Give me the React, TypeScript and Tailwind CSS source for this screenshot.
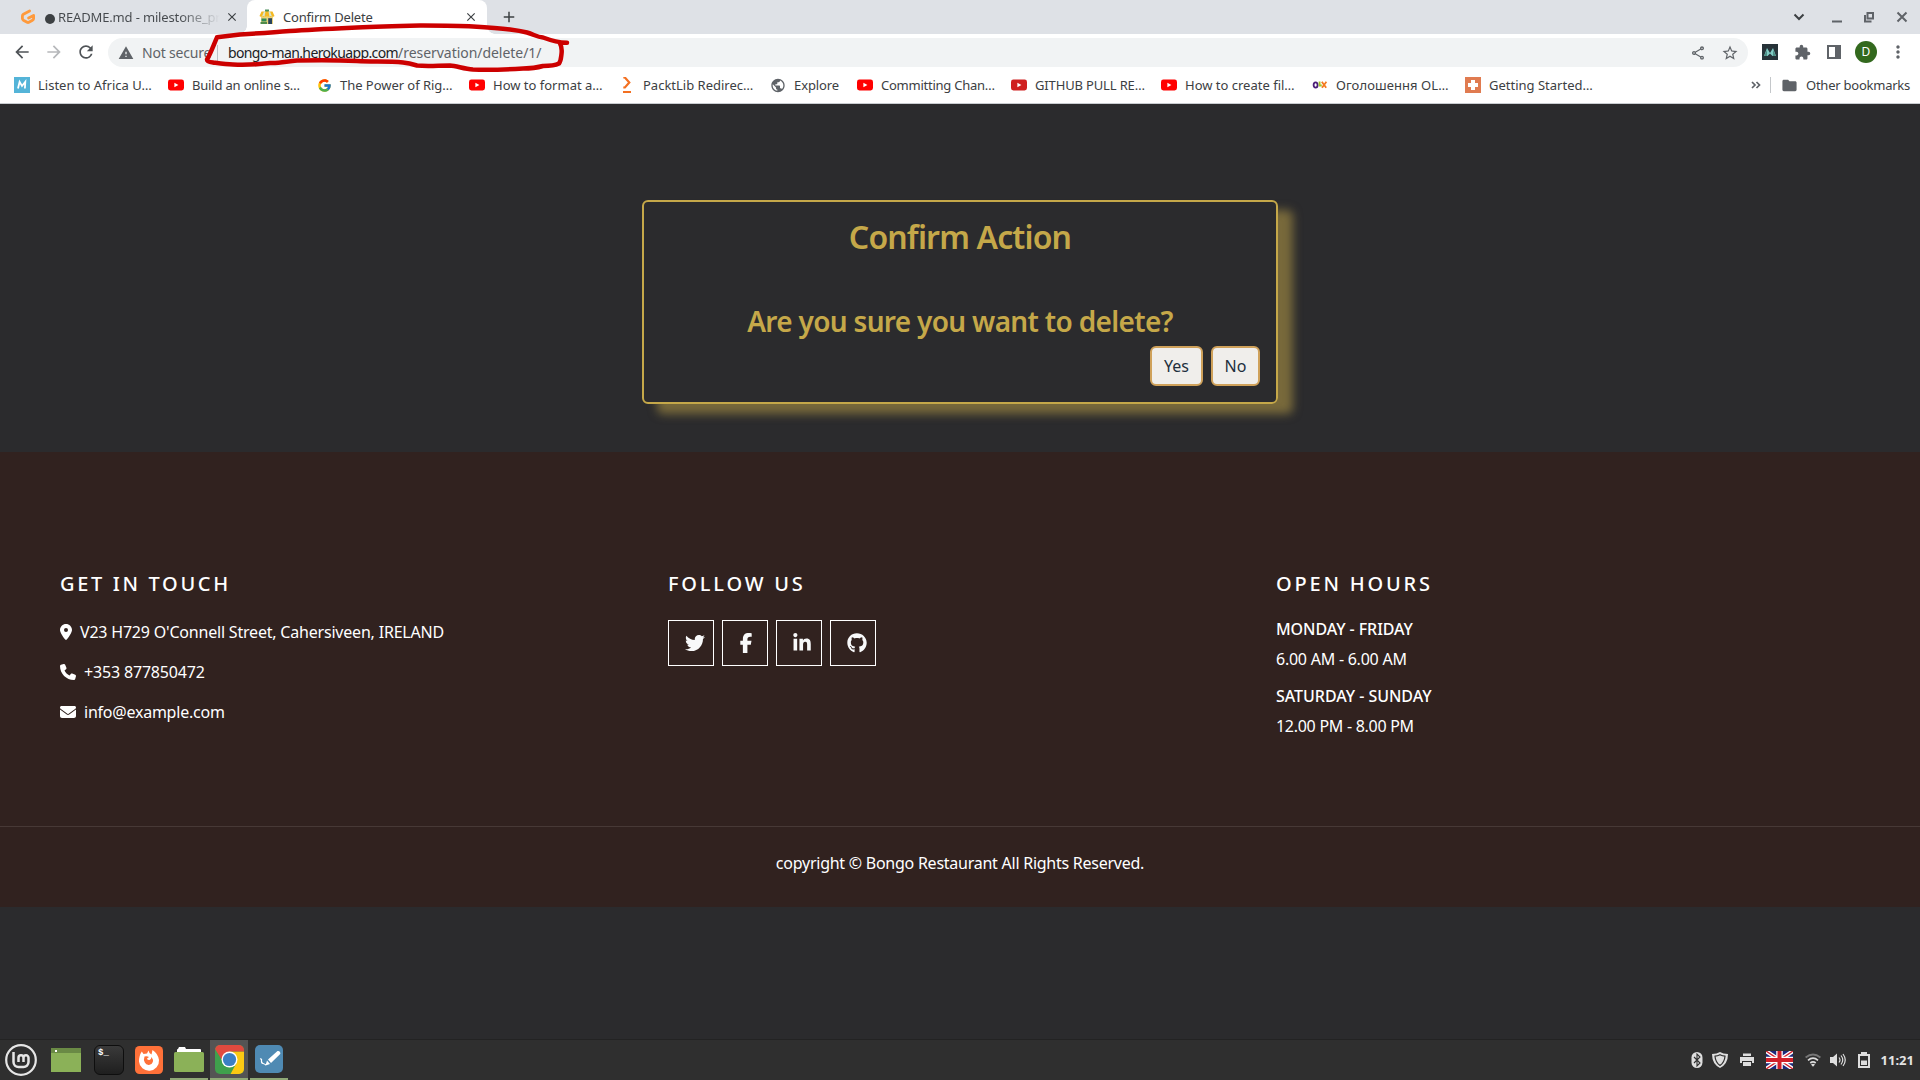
import React from "react";
import {
  MdArrowBack,
  MdArrowForward,
  MdRefresh,
  MdWarning,
  MdExtension,
  MdStarBorder,
  MdMoreVert,
  MdClose,
  MdPublic,
  MdOutlineShare,
  MdFolder,
  MdAdd,
} from "react-icons/md";
import { FaTwitter, FaFacebookF, FaLinkedinIn, FaGithub, FaPhone, FaEnvelope, FaLocationDot } from "react-icons/fa6";
import { FcGoogle } from "react-icons/fc";

const YouTube = ({ dark = false }: { dark?: boolean }) => (
  <svg viewBox="0 0 16 16" className="size-4">
    <rect x="0" y="2.5" width="16" height="11" rx="2.4" fill={dark ? "#cf2020" : "#ff0000"} />
    <path d="M6.4 5.7v4.6L10.4 8z" fill="#fff" />
  </svg>
);

const Packt = () => (
  <svg viewBox="0 0 16 16" className="size-4" fill="none" stroke="#f37021" strokeWidth="2">
    <path d="M4.3 0.5h1.6l4.4 5-4.4 5H4.3" strokeWidth="2.2" />
    <path d="M4 15h8" />
  </svg>
);

const Gitpod = () => (
  <svg viewBox="0 0 16 16" className="size-4" fill="none" stroke="#ff9a3c" strokeWidth="2.8" strokeLinecap="round" strokeLinejoin="round">
    <path d="M9.6 2 3.4 5.3Q2.4 5.9 2.4 7v2.6q0 1 1 1.6l3.7 2.1q.9.5 1.8 0l3.6-2.1q1.1-.6 1.1-1.7V6.4L8.6 9" />
  </svg>
);

const Store = () => (
  <svg viewBox="0 0 16 16" className="size-4">
    <path d="M2 7h12v8H2z" fill="#e9d27c" />
    <path d="M6 .5h4v3H6z" fill="#4a8f5a" />
    <path d="M2.500 2.500h11l2 4.500q-1.200 1.600-2.600 0-1.300 1.600-2.500 0-1.200 1.600-2.400 0-1.200 1.600-2.400 0-1.200 1.600-2.500 0Q1.700 8.600.5 7z" fill="#f5b921" />
    <path d="M5 2.500h1.500L5.600 7H3.200zM9.500 2.500H11L12.800 7h-2.400z" fill="#d8e6d0" />
    <path d="M2.500 9.500h5v3h-5z" fill="#2e8b57" />
    <path d="M9.200 9.200h3.800V15H9.200z" fill="#28435b" />
    <path d="M1.500 13h6.500v2H1.500z" fill="#4f8b4a" />
  </svg>
);

type Bookmark = { label: string; icon: React.ReactNode; cls: string; text: string };

const bookmarks: Bookmark[] = [
  {
    label: "Listen to Africa U…",
    cls: "w-[154px]",
    text: "tracking-normal",
    icon: (
      <svg viewBox="0 0 16 16" className="size-4">
        <rect width="16" height="16" fill="#54b4d8" />
        <path d="M4 11.5 5.6 4.8 8 9l3.3-4.2-.4 6.7" fill="none" stroke="#fff" strokeWidth="1.8" />
      </svg>
    ),
  },
  { label: "Build an online s…", cls: "w-[148px]", text: "tracking-[-0.18px]", icon: <YouTube /> },
  { label: "The Power of Rig…", cls: "w-[153px]", text: "tracking-[-0.04px]", icon: <FcGoogle className="size-[15px]" /> },
  { label: "How to format a…", cls: "w-[150px]", text: "tracking-[0px]", icon: <YouTube /> },
  { label: "PacktLib Redirec…", cls: "w-[151px]", text: "tracking-[0px]", icon: <Packt /> },
  { label: "Explore", cls: "w-[87px]", text: "tracking-[-0.1px]", icon: <MdPublic className="size-[17px] text-[#5f6368]" /> },
  { label: "Committing Chan…", cls: "w-[154px]", text: "tracking-[-0.24px]", icon: <YouTube /> },
  { label: "GITHUB PULL RE…", cls: "w-[150px]", text: "tracking-[-0.15px]", icon: <YouTube dark /> },
  { label: "How to create fil…", cls: "w-[151px]", text: "tracking-[0px]", icon: <YouTube /> },
  {
    label: "Оголошення OL…",
    cls: "w-[153px]",
    text: "tracking-[0.08px]",
    icon: (
      <svg viewBox="0 0 16 16" className="size-4" fill="none" strokeWidth="1.8">
        <ellipse cx="3.6" cy="8" rx="2" ry="2.7" stroke="#4b1e78" />
        <path d="M7.6 4.5v4h2.2" stroke="#a3c52c" />
        <path d="m9.8 4.8 4.4 6M14.4 4.8l-4.4 6" stroke="#f47b20" />
      </svg>
    ),
  },
  {
    label: "Getting Started…",
    cls: "w-[140px]",
    text: "tracking-[0px]",
    icon: (
      <svg viewBox="0 0 16 16" className="size-4">
        <rect width="16" height="16" fill="#e07b50" />
        <path d="M6 3h4v3h3v4h-3v3H6v-3H3V6h3z" fill="#fff" />
      </svg>
    ),
  },
];

function TabStrip() {
  return (
    <div className="flex h-[34px] items-stretch bg-[#dee1e6] text-[13px] text-[#3c4043]">
      <div className="flex w-[247px] items-center pl-5">
        <Gitpod />
        <span className="mt-[3px] ml-[9px] size-[10px] rounded-full bg-[#3c4043]" />
        <span className="mt-[2px] ml-[3px] w-[162px] overflow-hidden bg-gradient-to-r from-[#45494d] from-75% to-[#dee1e6] bg-clip-text whitespace-nowrap tracking-[-0.15px] text-transparent">
          README.md - milestone_pr
        </span>
        <MdClose className="ml-[5px] size-[14px]" />
      </div>
      <div className="relative flex w-[240px] items-center rounded-t-lg bg-white pl-3">
        <span className="absolute bottom-0 -left-2 size-2 bg-[radial-gradient(circle_at_0_0,transparent_7.5px,white_8px)]" />
        <span className="absolute -right-2 bottom-0 size-2 bg-[radial-gradient(circle_at_100%_0,transparent_7.5px,white_8px)]" />
        <Store />
        <span className="mt-[2px] ml-2 w-[181px] tracking-[-0.2px]">Confirm Delete</span>
        <MdClose className="size-[14px]" />
      </div>
      <div className="flex w-[1300px] items-center pl-[13px]">
        <MdAdd className="size-[18px]" />
      </div>
      <div className="flex items-center pl-[4px] text-[#5f6368]">
        <svg viewBox="0 0 16 16" className="size-4" fill="none" stroke="#3c4043" strokeWidth="2">
          <path d="m3.5 5.5 4.5 4.5 4.5-4.5" />
        </svg>
        <svg viewBox="0 0 16 16" className="ml-[22px] size-4">
          <path d="M3 11.5h10v2H3z" fill="#5f6368" />
        </svg>
        <svg viewBox="0 0 16 16" className="ml-4 size-4" fill="none" stroke="#5f6368" strokeWidth="2">
          <path d="M6.5 4H12v5.5H6.5z" />
          <path d="M4 6v6.500h6.500" />
        </svg>
        <svg viewBox="0 0 16 16" className="ml-[17px] size-4" fill="none" stroke="#5f6368" strokeWidth="2">
          <path d="m3.500 3.500 9 9m0-9-9 9" />
        </svg>
      </div>
    </div>
  );
}

function Toolbar() {
  return (
    <div className="flex h-[36px] items-center bg-white">
      <div className="flex w-[108px] items-center pl-3">
        <MdArrowBack className="size-5 text-[#4f5357]" />
        <MdArrowForward className="ml-3 size-5 text-[#b6b8bb]" />
        <MdRefresh className="ml-3 size-5 text-[#4f5357]" />
      </div>
      <div className="mt-[1px] flex h-[29px] w-[1640px] items-center rounded-full bg-[#f1f3f4] text-[14px]">
        <MdWarning className="ml-[10px] size-4 text-[#5f6368]" />
        <span className="ml-2 w-[75px] tracking-[-0.2px] text-[#5f6368]">Not secure</span>
        <span className="mr-[10px] h-4 w-px bg-[#bdc1c6]" />
        <span className="w-[170px] tracking-[-0.63px] whitespace-nowrap text-[#202124]">bongo-man.herokuapp.com</span>
        <span className="tracking-[-0.04px] text-[#5f6368]">/reservation/delete/1/</span>
        <MdOutlineShare className="mr-[15px] ml-auto size-4 text-[#5f6368]" />
        <MdStarBorder className="mr-[9px] size-[18px] text-[#5f6368]" />
      </div>
      <div className="flex items-center pl-[14px] text-[#5f6368]">
        <svg viewBox="0 0 16 16" className="size-4">
          <rect width="16" height="16" fill="#263238" />
          <path d="M2 12 5 4l3 5 3-5 3 8h-3.500L8 9.500 5.500 12z" fill="#80cbc4" />
          <path d="m2 12 3-6v6zM14 12l-3-6v6z" fill="#4d8f86" />
        </svg>
        <MdExtension className="ml-4 size-[17px]" />
        <svg viewBox="0 0 16 16" className="ml-[15px] size-4">
          <path d="M1 1h14v14H1zM3 3v10h6V3z" fill="#5f6368" fillRule="evenodd" />
        </svg>
        <span className="ml-[13px] flex size-[22px] items-center justify-center rounded-full bg-[#33691e] text-[12px] text-white">D</span>
        <MdMoreVert className="ml-[11px] size-5" />
      </div>
    </div>
  );
}

function BookmarkBar() {
  return (
    <div className="flex h-[34px] items-center border-b border-[#c9ccd0] bg-white pb-[3px] pl-[14px] text-[13px] text-[#3c4043]">
      {bookmarks.map((b, i) => (
        <div key={i} className={`flex shrink-0 items-center ${b.cls}`}>
          <span className="mr-2 flex size-4 items-center justify-center">{b.icon}</span>
          <span className={`mt-[1px] whitespace-nowrap ${b.text}`}>{b.label}</span>
        </div>
      ))}
      <svg viewBox="0 0 10 8" className="ml-auto h-2 w-[10px]" fill="none" stroke="#5f6368" strokeWidth="1.700">
        <path d="m1 1 3 3-3 3M5.500 1l3 3-3 3" />
      </svg>
      <span className="mr-[10px] ml-[9px] h-4 w-px bg-[#c4c7ca]" />
      <MdFolder className="size-[17px] text-[#5f6368]" />
      <span className="mt-[1px] ml-2 w-[114px] tracking-[-0.24px] whitespace-nowrap">Other bookmarks</span>
    </div>
  );
}

function UrlScribble() {
  return (
    <svg viewBox="0 0 400 60" className="absolute top-[20px] left-[190px] h-[60px] w-[400px]" fill="none" stroke="#cc0000" strokeWidth="4.500" strokeLinecap="round" strokeLinejoin="round">
      <path d="M27 17.300 50 14.500C66 13.500 82 12.500 100 11C122 9.500 145 8.500 167 7.500C190 6.500 212 6 233 5.500C250 5.500 268 5.500 283 6.500C297 7.500 310 8.500 320 9.500C328 10.500 333 11.500 337 12.500C344 14.500 347 17 353 17.500C361 20.500 368 22.500 377 22.700M370 23.500C372 27 372 30 371.500 34C371 38 371 41 369 43.500C364 46 358 46 353 46C346 48 340 48.500 333 48.500C316 49.500 300 50 283 49.500C274 49 267 46 260 45.500C248 45.500 238 46.500 227 45.500C222 44 218 43 213 42.500C198 41 182 42 167 41C147 40 127 40 107 40.500C96 41.500 89 43.500 80 43C68 44.500 56 45 43 44.500C36 44.500 30 43.500 23 42.500C19 42 17 41.500 17 39.500C20 35 24 24 27 17.300" />
    </svg>
  );
}

function Dialog() {
  return (
    <section className="flex h-[348px] justify-center pt-[96px]">
      <div className="flex h-[204px] w-[636px] flex-col rounded-md border-2 border-[#c5a849] shadow-[15px_10px_10px_rgba(197,168,73,0.5)]">
        <h1 className="mt-[16px] text-center text-[32px] leading-[38px] font-semibold tracking-[-0.85px] text-[#c5a849]">Confirm Action</h1>
        <h2 className="mt-[48px] text-center text-[28px] leading-[34px] font-semibold tracking-[-0.68px] text-[#c5a849]">
          Are you sure you want to delete?
        </h2>
        <div className="mt-[8px] flex justify-end gap-2 pr-4 text-base text-[#212f3d]">
          <button className="h-10 w-[53px] rounded-md border-2 border-[#cfa15a] bg-[#f0eeeb]">Yes</button>
          <button className="h-10 w-[49px] rounded-md border-2 border-[#cfa15a] bg-[#f0eeeb]">No</button>
        </div>
      </div>
    </section>
  );
}

function Footer() {
  return (
    <footer className="h-[455px] bg-[#31221f] text-base text-white">
      <div className="grid h-[374px] grid-cols-[608px_608px_608px] px-[60px] pt-[120px]">
        <div>
          <h3 className="text-[20px] leading-6 font-medium tracking-[2.66px]">GET IN TOUCH</h3>
          <p className="mt-[24px] flex h-6 items-center tracking-[-0.2px]">
            <FaLocationDot className="mr-2 h-4 w-3" />
            V23 H729 O'Connell Street, Cahersiveen, IRELAND
          </p>
          <p className="mt-4 flex h-6 items-center tracking-[-0.17px]">
            <FaPhone className="mr-2 size-4" />
            +353 877850472
          </p>
          <p className="mt-4 flex h-6 items-center tracking-[-0.23px]">
            <FaEnvelope className="mr-2 size-4" />
            info@example.com
          </p>
        </div>
        <div>
          <h3 className="text-[20px] leading-6 font-medium tracking-[2.8px]">FOLLOW US</h3>
          <div className="mt-[24px] flex gap-2 text-[20px] text-[#f8f9fa]">
            <a className="flex size-[46px] items-center border border-white pl-4"><FaTwitter /></a>
            <a className="flex size-[46px] items-center border border-white pl-[13px]"><FaFacebookF /></a>
            <a className="flex size-[46px] items-center border border-white pl-[15px]"><FaLinkedinIn /></a>
            <a className="flex size-[46px] items-center border border-white pl-4"><FaGithub /></a>
          </div>
        </div>
        <div>
          <h3 className="text-[20px] leading-6 font-medium tracking-[2.8px]">OPEN HOURS</h3>
          <p className="mt-[21px] leading-6 font-medium tracking-[-0.07px]">MONDAY - FRIDAY</p>
          <p className="mt-[6px] leading-6 tracking-[-0.24px]">6.00 AM - 6.00 AM</p>
          <p className="mt-[13px] leading-6 font-medium tracking-[-0.03px]">SATURDAY - SUNDAY</p>
          <p className="mt-[6px] leading-6 tracking-[-0.28px]">12.00 PM - 8.00 PM</p>
        </div>
      </div>
      <p className="border-t border-[#473936] pt-[24px] text-center leading-6 tracking-[-0.25px]">copyright © Bongo Restaurant All Rights Reserved.</p>
    </footer>
  );
}

function Taskbar() {
  return (
    <div className="flex h-[41px] items-stretch border-t border-[#232323] bg-[#2f2f2f]">
      <div className="flex w-[46px] items-center pl-[5px]">
        <svg viewBox="0 0 32 32" className="size-8" fill="none" stroke="#e6e6e6">
          <circle cx="16" cy="16" r="14.800" strokeWidth="2.200" />
          <path d="M8.500 8v10a5 5 0 0 0 5 5h5a5 5 0 0 0 5-5v-4.200a2.500 2.500 0 0 0-5 0V18m0-4.200a2.500 2.500 0 0 0-5 0V18" strokeWidth="2.500" />
        </svg>
      </div>
      <div className="flex w-[42px] items-center pl-[5px]">
        <svg viewBox="0 0 30 24" className="h-6 w-[30px]">
          <path d="M0 0h30v24H0z" fill="#8bb158" />
          <path d="M0 0h30v5H0z" fill="#6a8a45" />
          <path d="M4 2h2v2H4z" fill="#fff" />
        </svg>
      </div>
      <div className="flex w-[42px] items-center pl-[6px]">
        <span className="flex size-[30px] rounded-md border border-[#0e0e0e] bg-gradient-to-b from-[#3a3a3a] to-[#1f1f1f] pl-[3px] font-[Liberation_Mono] text-[9px] leading-[14px] font-bold text-white">$_</span>
      </div>
      <div className="flex w-[40px] items-center pl-[5px]">
        <svg viewBox="0 0 28 28" className="size-7">
          <rect width="28" height="28" rx="4.500" fill="#ff7139" />
          <path d="M6.800 5.500 8.500 8l3.500-.5 1.500-3q.5 3 3 4l1-4.500q5.500 3.500 6.500 10A10 10 0 0 1 4 15.500q0-6 2.800-10z" fill="#fff" />
          <path d="M9.500 10.500q2.500-.800 4.500.500l-2 1.500q.5 1.800 2.500 1.500 1.800-.5 2-3 2 2.500 1.300 5a4.300 4.300 0 0 1-8 .5Q8.300 13.500 9.500 10.500z" fill="#ff7139" />
        </svg>
      </div>
      <div className="flex w-[38px] items-center justify-center border-b-2 border-[#8fa876] pt-[2px]">
        <svg viewBox="0 0 30 26" className="h-[26px] w-[30px]">
          <path d="M3 4V3q0-1 1-1l1-2h6l1 2h14q1 0 1 1v2H3z" fill="#fff" />
          <rect y="5" width="30" height="20" rx="1.500" fill="#8bb158" />
        </svg>
      </div>
      <div className="ml-0.5 flex w-[38px] items-center justify-center border-b-2 border-[#8fa876] bg-[#545454]">
        <svg viewBox="0 0 29 29" className="size-[29px]">
          <defs>
            <clipPath id="tile"><rect width="29" height="29" rx="5" /></clipPath>
          </defs>
          <g clipPath="url(#tile)">
            <path d="M0 0h29v29H0z" fill="#3fa04c" />
            <path d="M14.500 6.500H29V29H15.500l6-11z" fill="#fbc913" />
            <path d="M0 0h29v6.500H14.500l-6 11L0 4z" fill="#e04a3f" />
          </g>
          <circle cx="14.500" cy="14.500" r="8" fill="#fff" />
          <circle cx="14.500" cy="14.500" r="6.600" fill="#3b7fc4" />
        </svg>
      </div>
      <div className="ml-0.5 flex w-[38px] items-center justify-center border-b-2 border-[#8fa876]">
        <svg viewBox="0 0 28 28" className="size-7">
          <rect width="28" height="28" rx="5" fill="#4f8ab3" />
          <path d="m13 14.500 9.500-8.500q1.500-.5 2.500 1t-.3 2.500L16 18zM12 15.500l3 3.500-4.500 1.500z" fill="#fff" />
          <path d="M5 14q2-.5 1.500 1.500-.3 2.500 1.500 3t3 1.500" fill="none" stroke="#fff" strokeWidth="1.200" />
        </svg>
      </div>
      <div className="ml-auto flex items-center text-[#e3e3e3]">
        <svg viewBox="0 0 12 16" className="h-4 w-3">
          <rect x=".5" width="11" height="16" rx="5.500" fill="#dedede" />
          <path d="m3 5 6 6-3 3V2l3 3-6 6" fill="none" stroke="#2f2f2f" strokeWidth="1.100" />
        </svg>
        <svg viewBox="0 0 16 16" className="ml-[9px] size-4">
          <path d="M8 0q3 2 8 2 0 10-8 14Q0 12 0 2q5 0 8-2z" fill="#dedede" />
          <path d="M8 2.800q2.500 1.300 5 1.400-.5 6.200-5 9.200-4.500-3-5-9.200 2.500-.1 5-1.400z" fill="none" stroke="#2f2f2f" strokeWidth="1.200" />
        </svg>
        <svg viewBox="0 0 14 14" className="ml-3 size-[14px]" fill="#dedede">
          <path d="M3 .5h8V3H3zM0 4h14v6h-2V8H2v2H0zM3 9h8v4H3z" />
        </svg>
        <svg viewBox="0 0 27 18" className="ml-[12px] h-[18px] w-[27px]">
          <path d="M0 0h27v18H0z" fill="#1b2a7b" />
          <path d="m0 0 27 18M27 0 0 18" stroke="#fff" strokeWidth="4" />
          <path d="m0 0 27 18M27 0 0 18" stroke="#d0202a" strokeWidth="1.400" />
          <path d="M13.500 0v18M0 9h27" stroke="#fff" strokeWidth="6.500" />
          <path d="M13.500 0v18M0 9h27" stroke="#d0202a" strokeWidth="4" />
        </svg>
        <svg viewBox="0 0 16 14" className="ml-3 h-[14px] w-4" fill="none" strokeWidth="1.700">
          <path d="M.6 4.500q7.400-6 14.800 0" stroke="#777" />
          <path d="M3 7.300q5-4.300 10 0M5.300 10q2.700-2.300 5.400 0" stroke="#dedede" />
          <path d="m8 13.800 2-2.300q-2-1.300-4 0z" fill="#dedede" />
        </svg>
        <svg viewBox="0 0 16 16" className="ml-[9px] size-4">
          <path d="M0 5h3l4-3.500v13L3 11H0z" fill="#dedede" />
          <path d="M9 5.500q2 2.500 0 5M11 3.500q3.500 4.500 0 9M13 2q4.500 6 0 12" fill="none" stroke="#dedede" strokeWidth="1.200" />
        </svg>
        <svg viewBox="0 0 12 16" className="ml-3 h-4 w-3">
          <path d="M3 0h6v2h3v14H0V2h3zM2 4v10h8V4z" fill="#dedede" fillRule="evenodd" />
          <path d="M3 8.500h6V13H3z" fill="#dedede" />
        </svg>
        <span className="mt-[1px] mr-[6px] ml-[11px] text-[13px] font-bold tracking-[0px]">11:21</span>
      </div>
    </div>
  );
}

export default function App() {
  return (
    <div className="relative flex h-[1080px] w-[1920px] flex-col overflow-hidden bg-[#2b2b2d] font-['Noto_Sans','Open_Sans',sans-serif]">
      <TabStrip />
      <Toolbar />
      <BookmarkBar />
      <UrlScribble />
      <main className="flex-1">
        <Dialog />
        <Footer />
      </main>
      <Taskbar />
    </div>
  );
}
